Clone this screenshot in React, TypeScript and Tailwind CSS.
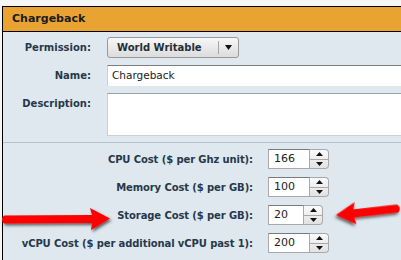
import * as React from 'react'

const labelFont = "font-['Verdana','DejaVu_Sans',sans-serif]"

function Spinner() {
  return (
    <div className="flex flex-col w-[19px] h-[20px] border border-[#a9a9a9] border-l-0 rounded-r-[4px] overflow-hidden bg-gradient-to-b from-[#fafafa] to-[#e2e2e2]">
      <div className="flex-1 flex items-center justify-center border-b border-[#a9a9a9]">
        <svg width="7" height="4" viewBox="0 0 7 4">
          <path d="M0 4 L3.5 0 L7 4 Z" fill="#111" />
        </svg>
      </div>
      <div className="flex-1 flex items-center justify-center">
        <svg width="7" height="4" viewBox="0 0 7 4">
          <path d="M0 0 L3.5 4 L7 0 Z" fill="#111" />
        </svg>
      </div>
    </div>
  )
}

interface CostRowProps {
  label: string
  value: string
  narrow?: boolean
}

function CostRow({ label, value, narrow }: CostRowProps) {
  return (
    <div className="flex items-center h-[20px]">
      <div className="w-[250px] text-right text-[10px] tracking-[-0.1px] font-bold text-[#26394a] whitespace-nowrap">
        {label}
      </div>
      <div className="ml-[15px] flex">
        <div
          className={
            (narrow ? 'w-[36px]' : 'w-[42px]') +
            ' h-[20px] bg-white border border-[#a9a9a9] border-t-[#7a7a7a] pl-[5px] text-[11px] text-[#222] flex items-center'
          }
        >
          {value}
        </div>
        <Spinner />
      </div>
    </div>
  )
}

// red pointer arrow with a drop shadow, drawn pointing right
function Arrow({ id, length }: { id: string; length: number }) {
  const tip = length - 4
  const neck = tip - 18
  return (
    <svg width={length + 4} height="30" viewBox={`0 0 ${length + 4} 30`}>
      <defs>
        <filter id={id} x="-10%" y="-30%" width="130%" height="170%">
          <feDropShadow dx="1.5" dy="2" stdDeviation="1.5" floodColor="#000" floodOpacity="0.6" />
        </filter>
      </defs>
      <path
        d={`M4 10.5 L${neck} 10 L${neck - 2} 3 L${tip} 13.5 L${neck - 1} 25 L${neck} 18 L4 18.5 Q0 14.5 4 10.5 Z`}
        fill="#f00"
        filter={`url(#${id})`}
      />
    </svg>
  )
}

export default function App() {
  return (
    <div className={`relative w-[401px] h-[260px] overflow-hidden bg-[#f6f6f6] pt-[6px] pl-[2px] ${labelFont}`}>
      <div className="h-full border-l border-t border-black bg-[#dfe7ef]">
        <div className="h-[25px] bg-[#e9a332] border-b border-black flex items-center pl-[9px]">
          <span className="text-[11px] font-bold text-[#1c1c1c]">Chargeback</span>
        </div>

        <div className="flex flex-col pt-[5px]">
          <div className="flex items-center h-[21px]">
            <div className="w-[88px] text-right text-[10px] font-bold text-[#26394a]">Permission:</div>
            <div className="ml-[16px] w-[132px] h-[21px] flex items-center rounded-[3px] border border-[#9a9a9a] bg-gradient-to-b from-[#f7f7f7] to-[#dcdcdc]">
              <span className="flex-1 pl-[9px] text-[10px] font-bold text-[#1f2f3a]">World Writable</span>
              <span className="w-px h-[13px] bg-[#a5a5a5]" />
              <span className="w-[19px] flex justify-center">
                <svg width="7" height="5" viewBox="0 0 7 5">
                  <path d="M0 0 L7 0 L3.5 5 Z" fill="#111" />
                </svg>
              </span>
            </div>
          </div>

          <div className="flex items-center h-[21px] mt-[7px]">
            <div className="w-[88px] text-right text-[10px] font-bold text-[#26394a]">Name:</div>
            <div className="ml-[16px] flex-1 h-[21px] bg-white border-t border-[#7d7d7d] border-l border-l-[#cfcfcf] flex items-center pl-[4px] text-[10.5px] text-[#222]">
              Chargeback
            </div>
          </div>

          <div className="flex items-start mt-[7px]">
            <div className="w-[88px] text-right text-[10px] font-bold text-[#26394a] pt-[3px]">Description:</div>
            <div className="ml-[16px] flex-1 h-[43px] bg-white border-t border-[#a0a0a0] border-l border-l-[#cfcfcf] border-b border-b-[#cfcfcf]" />
          </div>

          <div className="mt-[6px] h-px bg-[#b8c0c8]" />

          <div className="flex flex-col gap-[8px] pt-[6px]">
            <CostRow label="CPU Cost ($ per Ghz unit):" value="166" />
            <CostRow label="Memory Cost ($ per GB):" value="100" />
            <CostRow label="Storage Cost ($ per GB):" value="20" narrow />
            <CostRow label="vCPU Cost ($ per additional vCPU past 1):" value="200" />
          </div>
        </div>
      </div>

      <div className="absolute left-0 top-[205px]">
        <Arrow id="shL" length={114} />
      </div>
      <div className="absolute left-[328px] top-[198px] -rotate-[7deg]">
        <div className="-scale-x-100">
          <Arrow id="shR" length={70} />
        </div>
      </div>
    </div>
  )
}
